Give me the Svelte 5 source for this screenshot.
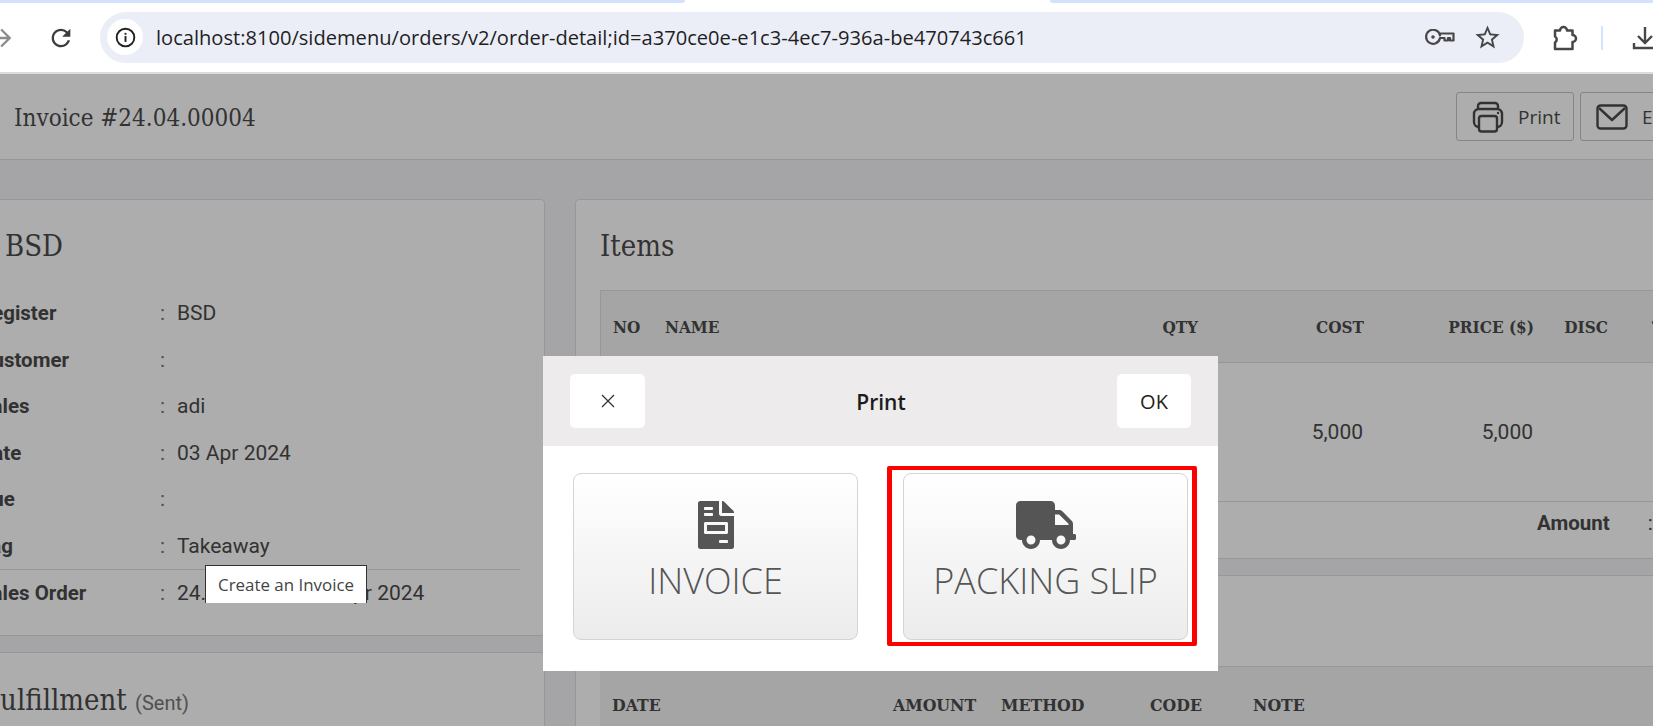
<script lang="ts">
  // order info rows in the left card
  const infoRows = [
    { label: "Register", value: "BSD" },
    { label: "Customer", value: "" },
    { label: "Sales", value: "adi" },
    { label: "Date", value: "03 Apr 2024" },
    { label: "Due", value: "" },
    { label: "Tag", value: "Takeaway", ruled: true },
    { label: "Sales Order", value: "24.04.00004 - 03 Apr 2024" },
  ];
  const paymentCols = ["DATE", "AMOUNT", "METHOD", "CODE", "NOTE"];
</script>

<div class="tabs">
  <div class="tab-left"></div>
  <div class="tab-right"></div>
</div>

<header class="toolbar">
  <svg class="forward" viewBox="0 0 24 24" width="28" height="28"><path d="M12 4l-1.41 1.41L16.17 11H4v2h12.17l-5.58 5.59L12 20l8-8z" fill="#8b8b8b" /></svg>
  <svg class="reload" viewBox="0 0 24 24" width="28" height="28"><path d="M17.65 6.35A7.958 7.958 0 0 0 12 4c-4.42 0-7.99 3.58-7.99 8s3.57 8 7.99 8c3.73 0 6.84-2.55 7.73-6h-2.08A5.99 5.99 0 0 1 12 18c-3.31 0-6-2.69-6-6s2.69-6 6-6c1.66 0 3.14.69 4.22 1.78L13 11h7V4l-2.35 2.35z" fill="#3c3c3c" /></svg>
  <div class="omnibox">
    <span class="site-info">
      <svg viewBox="0 0 20 20" width="21" height="21">
        <circle cx="10" cy="10" r="8.4" fill="none" stroke="#1f1f1f" stroke-width="1.8" />
        <rect x="9.1" y="8.6" width="1.8" height="5.6" fill="#1f1f1f" />
        <rect x="9.1" y="5.6" width="1.8" height="1.8" fill="#1f1f1f" />
      </svg>
    </span>
    <span class="url">localhost:8100/sidemenu/orders/v2/order-detail;id=a370ce0e-e1c3-4ec7-936a-be470743c661</span>
    <svg class="key" viewBox="0 0 30 16" width="30" height="16" fill="none" stroke="#474747" stroke-width="2.2" stroke-linejoin="round">
      <path d="M15 4.5h13.5v7H25v-2.500h-2v2.500h-3.500v-2.500h-4.500a7 7 0 1 1 0-2.500z" />
      <circle cx="8" cy="8" r="1.800" fill="#474747" stroke="none" />
    </svg>
    <svg class="star" viewBox="0 0 24 24" width="29" height="29"><path d="M22 9.24l-7.19-.62L12 2 9.19 8.63 2 9.24l5.46 4.73L5.82 21 12 17.27 18.18 21l-1.63-7.03L22 9.24zM12 15.4l-3.76 2.27 1-4.28-3.32-2.88 4.38-.38L12 6.1l1.71 4.04 4.38.38-3.32 2.88 1 4.28L12 15.4z" fill="#474747" /></svg>
  </div>
  <svg class="puzzle" viewBox="0 0 26 26" width="26" height="26">
    <path d="M3 5.500h5a3.500 3.500 0 0 1 7 0h5.500v4.500a3.500 3.500 0 0 1 0 7v7H3v-6.500a3.500 3.500 0 0 0 0-6z" fill="none" stroke="#474747" stroke-width="2.500" stroke-linejoin="round" />
  </svg>
  <span class="sep"></span>
  <svg class="download" viewBox="0 0 26 26" width="26" height="26"><path d="M13 2v15M6 11l7 7 7-7M2 18v5h22v-5" fill="none" stroke="#474747" stroke-width="2.4" /></svg>
</header>

<div class="page">
  <div class="title-bar">
    <h1>Invoice #24.04.00004</h1>
    <div class="actions">
      <button class="action">
        <svg viewBox="0 0 32 32" width="32" height="32" fill="none" stroke="#4b4b4b" stroke-width="2.4" stroke-linejoin="round">
          <path d="M6 8V5a3 3 0 0 1 3-3h14a3 3 0 0 1 3 3v3" />
          <rect x="2" y="8" width="28" height="18" rx="5" />
          <rect x="7" y="15" width="18" height="15.500" rx="2.500" fill="#fff" />
          <circle cx="26" cy="12" r="1.200" fill="#4b4b4b" stroke="none" />
        </svg>
        Print
      </button>
      <button class="action email">
        <svg viewBox="0 0 32 26" width="32" height="26" fill="none" stroke="#4b4b4b" stroke-width="2.4" stroke-linejoin="round">
          <rect x="1.500" y="1.500" width="29" height="23" rx="3" />
          <path d="M3 4l13 12L29 4" />
        </svg>
        Email
      </button>
    </div>
  </div>

  <main class="columns">
    <div class="col-left">
      <section class="card info">
        <h2 class="bsd">BSD</h2>
        {#each infoRows as row}
          <div class="info-row" class:ruled={row.ruled}>
            <b>{row.label}</b><span class="colon">:</span><span>{row.value}</span>
          </div>
        {/each}
      </section>
      <section class="card info">
        <h2 class="fulfillment">Fulfillment <small>(Sent)</small></h2>
      </section>
    </div>

    <div class="col-right">
      <section class="card">
        <h2>Items</h2>
        <div class="item-grid item-head">
          <span>NO</span><span>NAME</span><span class="num">QTY</span><span class="num">COST</span><span class="num">PRICE ($)</span><span class="num">DISC</span><span class="total">TOTAL</span>
        </div>
        <div class="item-grid item-row">
          <span>1</span><span></span><span class="num">1</span><span class="num">5,000</span><span class="num">5,000</span><span class="num"></span><span class="total"></span>
        </div>
        <div class="summary"><b>Amount</b><span>:</span></div>
      </section>
      <section class="card">
        <h2>Payments</h2>
        <div class="pay-head">
          {#each paymentCols as col}<span>{col}</span>{/each}
        </div>
      </section>
    </div>
  </main>

  <div class="backdrop">
    <div class="tooltip">Create an Invoice</div>
    <div class="modal">
      <div class="modal-head">
        <button class="head-btn close" aria-label="Close">
          <svg viewBox="0 0 16 16" width="16" height="16"><path d="M2 2l12 12M14 2L2 14" stroke="#333" stroke-width="1.3" /></svg>
        </button>
        <span class="modal-title">Print</span>
        <button class="head-btn ok">OK</button>
      </div>
      <div class="modal-body">
        <button class="choice">
          <svg viewBox="0 0 384 512" width="36" height="48"><path d="M288 256H96v64h192v-64zm89-151L279.1 7c-4.5-4.5-10.6-7-17-7H256v128h128v-6.1c0-6.3-2.5-12.4-7-16.9zm-153 31V0H24C10.7 0 0 10.7 0 24v464c0 13.3 10.7 24 24 24h336c13.3 0 24-10.7 24-24V160H248c-13.2 0-24-10.8-24-24zM64 72c0-4.4 3.6-8 8-8h80c4.4 0 8 3.6 8 8v16c0 4.4-3.6 8-8 8H72c-4.4 0-8-3.6-8-8V72zm0 64c0-4.4 3.6-8 8-8h80c4.4 0 8 3.6 8 8v16c0 4.4-3.6 8-8 8H72c-4.4 0-8-3.6-8-8v-16zm256 304c0 4.4-3.6 8-8 8h-80c-4.4 0-8-3.6-8-8v-16c0-4.4 3.6-8 8-8h80c4.4 0 8 3.6 8 8v16zm0-200v96c0 8.8-7.2 16-16 16H80c-8.8 0-16-7.2-16-16v-96c0-8.8 7.2-16 16-16h224c8.8 0 16 7.2 16 16z" fill="#555" /></svg>
          <span>INVOICE</span>
        </button>
        <button class="choice marked">
          <svg viewBox="0 0 640 512" width="60" height="48"><path d="M624 352h-16V243.9c0-12.7-5.1-24.9-14.1-33.9L494 110.1c-9-9-21.2-14.1-33.9-14.1H416V48c0-26.5-21.5-48-48-48H48C21.5 0 0 21.5 0 48v320c0 26.5 21.5 48 48 48h16c0 53 43 96 96 96s96-43 96-96h128c0 53 43 96 96 96s96-43 96-96h48c8.8 0 16-7.2 16-16v-32c0-8.8-7.2-16-16-16zM160 464c-26.5 0-48-21.5-48-48s21.5-48 48-48 48 21.5 48 48-21.5 48-48 48zm320 0c-26.5 0-48-21.5-48-48s21.5-48 48-48 48 21.5 48 48-21.5 48-48 48zm80-208H416V144h44.1l99.9 99.9V256z" fill="#555" /></svg>
          <span>PACKING SLIP</span>
        </button>
      </div>
    </div>
  </div>
</div>

<style>
  :global(body) {
    overflow: hidden;
    background: #fff;
    height: 726px;
  }
  button {
    font: inherit;
    cursor: pointer;
  }

  /* browser chrome */
  .tabs {
    display: flex;
    justify-content: space-between;
    height: 3px;
  }
  .tab-left {
    width: 685px;
    background: #d3e3fd;
    border-bottom-right-radius: 4px;
  }
  .tab-right {
    width: 603px;
    background: #d3e3fd;
    border-bottom-left-radius: 4px;
  }
  .toolbar {
    display: flex;
    align-items: center;
    height: 69px;
    border-bottom: 2px solid #dcdcdc;
    overflow: hidden;
  }
  .forward {
    flex: none;
    margin-left: -12px;
  }
  .reload {
    flex: none;
    margin-left: 31px;
  }
  .omnibox {
    flex: none;
    display: flex;
    align-items: center;
    width: 1424px;
    height: 51px;
    margin-left: 25px;
    margin-top: -1px;
    border-radius: 26px;
    background: #ebeef7;
  }
  .site-info {
    display: flex;
    align-items: center;
    justify-content: center;
    width: 36px;
    height: 36px;
    margin-left: 7px;
    border-radius: 50%;
    background: #fff;
  }
  .url {
    margin-left: 13px;
    font: 20.1px "Open Sans", sans-serif;
    color: #1f1f1f;
    white-space: nowrap;
  }
  .key {
    margin-left: auto;
  }
  .star {
    margin-left: 18px;
    margin-right: 22px;
  }
  .puzzle {
    flex: none;
    margin-left: 28px;
  }
  .sep {
    flex: none;
    width: 2px;
    height: 24px;
    margin-left: 23px;
    background: #d3e3fd;
  }
  .download {
    flex: none;
    margin-left: 29px;
  }

  /* page */
  .page {
    position: relative;
    height: 652px;
    overflow: hidden;
    background: #f3f4f7;
    color: #4b4b4b;
    font: 21px Roboto, sans-serif;
  }
  .title-bar {
    display: flex;
    align-items: center;
    height: 85px;
    padding-left: 14px;
    background: #fff;
    border-bottom: 1px solid #e0e0e0;
  }
  h1,
  h2 {
    margin: 0;
    font-family: "DejaVu Serif Condensed", "DejaVu Serif", serif;
    font-weight: normal;
  }
  h1 {
    font-size: 24px;
    padding-top: 2px;
  }
  .actions {
    display: flex;
    flex: none;
    gap: 6px;
    margin-left: auto;
    margin-right: -52px;
  }
  .action {
    display: flex;
    align-items: center;
    gap: 14px;
    height: 49px;
    width: 118px;
    padding: 0 0 0 15px;
    border: 1px solid #c4c4c4;
    border-radius: 3px;
    background: #fff;
    color: #4b4b4b;
    font: 19px "Open Sans", sans-serif;
  }
  .action.email {
    width: 125px;
  }
  .columns {
    display: flex;
    gap: 30px;
    width: 1800px;
    margin-left: -37px;
    padding-top: 39px;
  }
  .col-left {
    display: flex;
    flex-direction: column;
    flex: none;
    gap: 16px;
    width: 582px;
  }
  .col-right {
    display: flex;
    flex-direction: column;
    flex: none;
    gap: 16px;
    width: 1170px;
  }
  .card {
    padding: 0 24px;
    background: #fff;
    border: 1px solid #dedfe1;
    border-radius: 4px;
  }
  .card.info {
    padding-left: 15px;
  }
  .card h2 {
    font-size: 29px;
    line-height: 93px;
    height: 90px;
  }
  .card h2.bsd {
    padding-left: 26px;
  }
  .card h2.fulfillment {
    margin-left: 3px;
    height: 94px;
    line-height: 94px;
    white-space: nowrap;
  }
  .fulfillment small {
    font: 20px Roboto, sans-serif;
    color: #777;
  }

  .info-row {
    display: grid;
    grid-template-columns: 181px 17px 1fr;
    align-items: center;
    height: 46.5px;
  }
  .info-row b {
    font-size: 20.5px;
    font-weight: 700;
  }
  .info-row .colon {
    color: #777;
  }
  .info-row.ruled {
    border-bottom: 1px solid #dedfe1;
  }
  .col-left .card:first-child {
    height: 437px;
    box-sizing: border-box;
  }

  /* tables */
  .item-grid {
    display: grid;
    grid-template-columns: 64px 453px 80px 166px 170px 74px 1fr;
  }
  .item-head {
    align-items: center;
    height: 73px;
    box-sizing: border-box;
    padding-top: 1px;
    background: #f3f3f3;
    border: 1px solid #dedfe1;
    font: bold 17px "DejaVu Serif Condensed", "DejaVu Serif", serif;
  }
  .item-head span:first-child {
    padding-left: 12px;
  }
  .num {
    text-align: right;
  }
  .total {
    padding-left: 44px;
  }
  .item-row {
    align-items: center;
    height: 139px;
    box-sizing: border-box;
    border-bottom: 1px solid #dedfe1;
  }
  .item-row span:first-child {
    padding-left: 12px;
  }
  .summary {
    display: flex;
    align-items: center;
    gap: 38px;
    height: 56px;
    padding-left: 937px;
    padding-bottom: 14px;
    box-sizing: border-box;
  }
  .summary b {
    font-size: 20.5px;
  }
  .pay-head {
    display: grid;
    grid-template-columns: 281px 108px 149px 103px 1fr;
    align-items: center;
    height: 75px;
    padding-left: 12px;
    background: #f3f3f3;
    border-top: 1px solid #dedfe1;
    font: bold 17.5px "DejaVu Serif Condensed", "DejaVu Serif", serif;
  }

  /* print dialog over the dimmed page */
  .backdrop {
    position: absolute;
    inset: 0;
    display: flex;
    align-items: flex-start;
    padding: 282px 0 0 543px;
    background: rgba(0, 0, 0, 0.32);
  }
  .tooltip {
    position: absolute;
    left: 205px;
    top: 491px;
    box-sizing: border-box;
    width: 162px;
    height: 38px;
    padding-top: 7px;
    text-align: center;
    background: #fff;
    border: 1px solid #333;
    border-bottom: none;
    color: #444;
    font: 16.9px "Open Sans", sans-serif;
  }
  .modal {
    width: 675px;
    height: 315px;
    background: #fff;
    font-family: "Open Sans", sans-serif;
  }
  .modal-head {
    display: flex;
    align-items: center;
    justify-content: space-between;
    height: 90px;
    padding: 0 27px;
    background: #edebec;
  }
  .modal-title {
    padding-top: 2px;
    font-size: 21px;
    font-weight: 600;
    color: #1c1c1c;
  }
  .head-btn {
    display: flex;
    align-items: center;
    justify-content: center;
    height: 54px;
    border: none;
    border-radius: 5px;
    background: #fff;
    color: #222;
    font-size: 20px;
  }
  .close {
    width: 75px;
  }
  .ok {
    width: 74px;
  }
  .modal-body {
    display: flex;
    gap: 45px;
    padding: 27px 30px 0;
  }
  .choice {
    flex: 1;
    position: relative;
    display: flex;
    flex-direction: column;
    align-items: center;
    height: 167px;
    padding: 27px 0 0;
    border: 1px solid #d4d4d4;
    border-radius: 8px;
    background: linear-gradient(#fff, #ececec);
    color: #555;
    font-size: 36px;
    font-weight: 300;
  }
  .choice span {
    margin-top: 7px;
    line-height: 50px;
  }
  /* red annotation box round the second option */
  .marked::after {
    content: "";
    position: absolute;
    inset: -8px -10px -7px -17px;
    border-style: solid;
    border-color: #f00;
    border-width: 4px 5px;
    border-radius: 2px;
  }
</style>
